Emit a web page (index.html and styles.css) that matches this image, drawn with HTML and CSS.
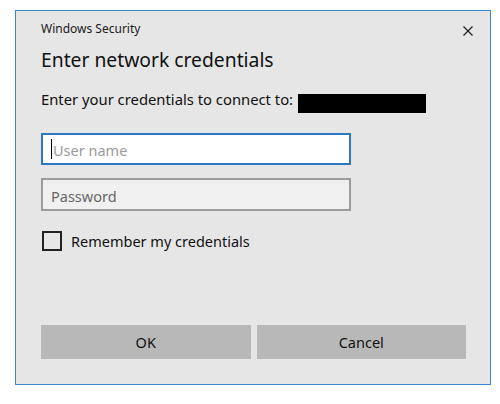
FILE: index.html
```html
<!DOCTYPE html>
<html>
<head>
<meta charset="utf-8">
<link rel="stylesheet" href="styles.css">
</head>
<body>
<div class="dialog">
  <div class="titlebar">
    <span class="app">Windows Security</span>
    <svg class="close" width="10" height="10" viewBox="0 0 10 10"><path d="M0.5 0.5 L9.5 9.5 M9.5 0.5 L0.5 9.5" stroke="#1a1a1a" stroke-width="1.1" fill="none"/></svg>
  </div>
  <div class="heading">Enter network credentials</div>
  <div class="prompt">Enter your credentials to connect to: <span class="redact"></span></div>
  <div class="field focused"><span class="caret"></span><span class="ph">User name</span></div>
  <div class="field pass"><span class="ph2">Password</span></div>
  <div class="check"><span class="box"></span><span>Remember my credentials</span></div>
  <div class="buttons">
    <div class="btn">OK</div>
    <div class="btn">Cancel</div>
  </div>
</div>
</body>
</html>
```

FILE: styles.css
```css
html, body {
  margin: 0;
  padding: 0;
  background: #ffffff;
}
body {
  font-family: "Noto Sans", "Open Sans", sans-serif;
  color: #111;
  padding-top: 10px;
  padding-left: 15px;
}
.dialog {
  box-sizing: border-box;
  width: 476px;
  height: 375px;
  border: 1px solid #3a86cc;
  background: #e6e6e6;
  padding: 0 24px 25px 25px;
  display: flex;
  flex-direction: column;
}
.titlebar {
  display: flex;
  justify-content: space-between;
  align-items: center;
  padding-top: 10px;
  margin-right: -7px;
}
.app {
  font-size: 12px;
  line-height: 16px;
  color: #1a1a1a;
}
.close {
  display: block;
  margin-top: 3px;
}
.heading {
  margin-top: 10px;
  font-size: 19.3px;
  line-height: 26px;
  color: #111;
}
.prompt {
  margin-top: 16px;
  font-size: 14.8px;
  line-height: 20px;
  color: #111;
}
.redact {
  display: inline-block;
  width: 128px;
  height: 19px;
  background: #000;
  vertical-align: -8px;
  margin-left: 1px;
}
.field {
  box-sizing: border-box;
  width: 310px;
  height: 32px;
  margin-top: 20px;
  border: 2px solid #2d78c0;
  background: #ffffff;
  display: flex;
  align-items: center;
  padding-left: 8px;
  padding-top: 2px;
  font-size: 14.5px;
  line-height: 20px;
}
.caret {
  display: block;
  width: 1px;
  height: 20px;
  background: #000;
  margin-right: 1px;
  margin-top: -2px;
}
.ph {
  color: #9a9a9a;
}
.field.pass {
  height: 33px;
  margin-top: 13px;
  border-color: #9b9b9b;
  background: #f0f0f0;
}
.ph2 {
  color: #666;
}
.check {
  margin-top: 20px;
  display: flex;
  align-items: center;
  font-size: 14.5px;
  line-height: 20px;
  color: #111;
  padding-left: 1px;
}
.box {
  box-sizing: border-box;
  width: 20px;
  height: 20px;
  border: 2px solid #222;
  margin-right: 9px;
}
.buttons {
  margin-top: auto;
  display: grid;
  grid-template-columns: 1fr 1fr;
  gap: 6px;
  width: 425px;
}
.btn {
  height: 34px;
  background: #b8b8b8;
  display: flex;
  align-items: center;
  justify-content: center;
  font-size: 14.5px;
  color: #111;
}
```
